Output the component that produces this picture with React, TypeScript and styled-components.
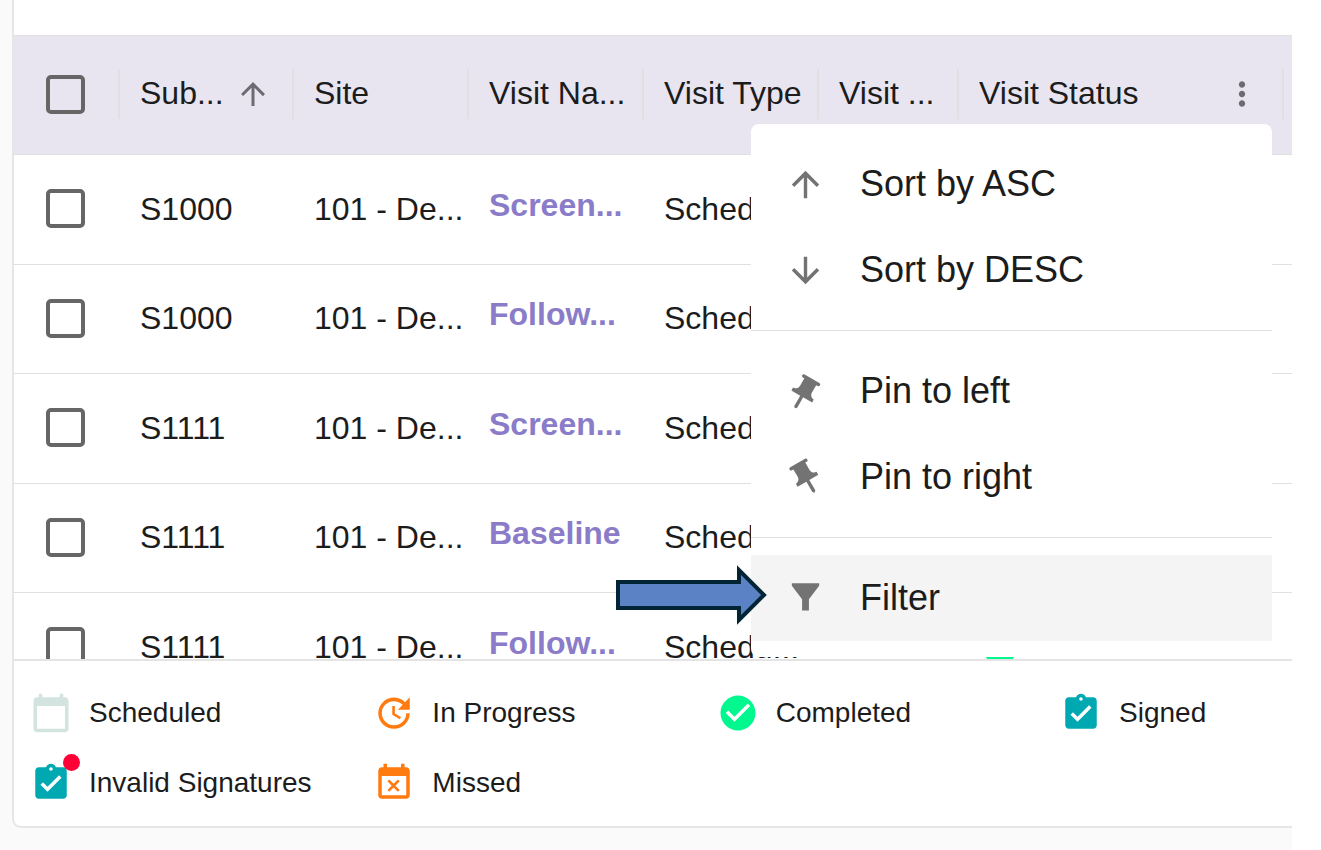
import React from "react";
import styled, { createGlobalStyle, css } from "styled-components";

const line = "#e0e0e0";

const GlobalStyle = createGlobalStyle`
  *, *::before, *::after { box-sizing: border-box; }
  body {
    margin: 0;
    background: #ffffff;
    color: #1c1c1c;
    font-family: "Liberation Sans", Arial, sans-serif;
  }
`;

const Page = styled.div`
  min-height: 100vh;
  margin-right: 29px;
  padding: 0 0 22px 12px;
  background: #fafafa;
  overflow: hidden;
`;

const Card = styled.main`
  padding-top: 35px;
  background: #ffffff;
  border-left: 2px solid #e6e6e6;
  border-bottom: 2px solid #e6e6e6;
  border-bottom-left-radius: 9px;
`;

const GridViewport = styled.div`
  height: 624px;
  overflow: hidden;
  border-top: 1px solid ${line};
`;

const Table = styled.table`
  width: 100%;
  table-layout: fixed;
  border-collapse: separate;
  border-spacing: 0;
  font-size: 32px;
  line-height: 40px;
`;

const Col = styled.col<{ $w?: number }>`
  ${(p) => p.$w && css`width: ${p.$w}px;`}
`;

const HeadCell = styled.th`
  position: relative;
  height: 119px;
  padding: 0 0 2px;
  background: #e8e5f1;
  border-bottom: 1px solid ${line};
  font-weight: 400;
  text-align: left;
  white-space: nowrap;
`;

const HeadInner = styled.div<{ $check?: boolean }>`
  display: flex;
  align-items: center;
  justify-content: space-between;
  height: 50px;
  padding: 0 21px;
  padding-left: ${(p) => (p.$check ? 32 : 20)}px;
  border-right: 2px solid #e0e0e2;
`;

const HeadLabel = styled.span`
  padding-bottom: 2px;
`;

const Row = styled.tr`
  height: 110px;

  &:nth-child(even) { height: 109px; }
`;

const Cell = styled.td<{ $check?: boolean }>`
  padding: 0 0 2px ${(p) => (p.$check ? 32 : 20)}px;
  border-bottom: 1px solid ${line};
  white-space: nowrap;
  overflow: hidden;
  vertical-align: middle;
`;

const VisitLink = styled.a`
  display: block;
  padding-bottom: 8px;
  color: #8a7cc9;
  font-weight: 700;
  text-decoration: none;
`;

const Checkbox = styled.input`
  appearance: none;
  display: block;
  width: 39px;
  height: 39px;
  margin: 0;
  border: 4px solid #666666;
  border-radius: 5px;
  background: transparent;
`;

const IconButton = styled.button`
  display: flex;
  padding: 0;
  border: 0;
  background: none;
  color: #6c6b72;
`;

const Menu = styled.div`
  position: absolute;
  z-index: 2;
  top: 88px;
  right: 12px;
  width: 521px;
  padding: 17px 0 16px;
  background: #ffffff;
  border-radius: 8px;
`;

const MenuItem = styled.button<{ $active?: boolean }>`
  display: flex;
  align-items: center;
  gap: 34px;
  width: 100%;
  height: 86px;
  padding: 0 34px;
  border: 0;
  background: ${(p) => (p.$active ? "#f4f4f4" : "transparent")};
  color: #1c1c1c;
  font: inherit;
  font-size: 36px;
  text-align: left;

  svg { color: #737373; }
`;

const Divider = styled.hr`
  height: 1px;
  margin: 17px 0;
  border: 0;
  background: ${line};
`;

const Pointer = styled.svg`
  position: absolute;
  top: 441px;
  left: -136px;
`;

const Legend = styled.ul`
  display: grid;
  grid-template-columns: repeat(3, minmax(0, 3fr)) minmax(0, 2fr);
  grid-auto-rows: 70px;
  margin: 0;
  padding: 17px 3px 8px 16px;
  border-top: 2px solid #e4e4e4;
  list-style: none;
  font-size: 28px;
  line-height: 36px;
`;

const LegendItem = styled.li`
  display: flex;
  align-items: center;
  gap: 17px;
  white-space: nowrap;
`;

const LegendIcon = styled.span<{ $color: string }>`
  position: relative;
  display: flex;
  color: ${(p) => p.$color};
`;

const Badge = styled.span`
  position: absolute;
  top: -8px;
  right: -8px;
  width: 17px;
  height: 17px;
  border-radius: 50%;
  background: #ff0037;
`;

const Glyph = styled.svg`
  display: block;
  flex: none;
`;

const paths = {
  up: "M4 12l1.41 1.41L11 7.83V20h2V7.83l5.58 5.59L20 12l-8-8-8 8z",
  down: "M20 12l-1.41-1.41L13 16.17V4h-2v12.17l-5.58-5.59L4 12l8 8 8-8z",
  more: "M12 8c1.1 0 2-.9 2-2s-.9-2-2-2-2 .9-2 2 .9 2 2 2zm0 2c-1.1 0-2 .9-2 2s.9 2 2 2 2-.9 2-2-.9-2-2-2zm0 6c-1.1 0-2 .9-2 2s.9 2 2 2 2-.9 2-2-.9-2-2-2z",
  pin: "M16 9V4h1c.55 0 1-.45 1-1s-.45-1-1-1H7c-.55 0-1 .45-1 1s.45 1 1 1h1v5c0 1.66-1.34 3-3 3v2h5.97v7l1 1 1-1v-7H19v-2c-1.66 0-3-1.34-3-3z",
  filter: "M4 3h16v1.600l-6 7.800V19h-4v-6.600L4 4.600z",
  calendar: "M20 3h-1V1h-2v2H7V1H5v2H4c-1.1 0-2 .9-2 2v16c0 1.1.9 2 2 2h16c1.1 0 2-.9 2-2V5c0-1.1-.9-2-2-2zm0 18H4V8h16v13z",
  update: "M21 10.12h-6.78l2.74-2.82c-2.73-2.7-7.15-2.8-9.88-.1-2.73 2.71-2.73 7.08 0 9.79s7.15 2.71 9.88 0C18.32 15.65 19 14.08 19 12.1h2c0 1.98-.88 4.55-2.64 6.29-3.51 3.48-9.21 3.48-12.72 0-3.5-3.47-3.53-9.11-.02-12.58s9.14-3.47 12.65 0L21 3v7.12zM12.5 8v4.25l3.5 2.08-.72 1.21L11 13V8h1.5z",
  done: "M12 2C6.48 2 2 6.48 2 12s4.48 10 10 10 10-4.48 10-10S17.52 2 12 2zm-2 15l-5-5 1.41-1.41L10 14.17l7.59-7.59L19 8l-9 9z",
  signed: "M19 3h-4.18C14.4 1.84 13.3 1 12 1c-1.3 0-2.4.84-2.82 2H5c-1.1 0-2 .9-2 2v14c0 1.1.9 2 2 2h14c1.1 0 2-.9 2-2V5c0-1.1-.9-2-2-2zm-7 0c.55 0 1 .45 1 1s-.45 1-1 1-1-.45-1-1 .45-1 1-1zm-2 14l-4-4 1.41-1.41L10 14.17l6.59-6.59L18 9l-8 8z",
  missed: "M9.31 17l2.44-2.44L14.19 17l1.06-1.06-2.44-2.44 2.44-2.44L14.19 10l-2.44 2.44L9.31 10l-1.06 1.06 2.44 2.44-2.44 2.44L9.31 17zM19 3h-1V1h-2v2H8V1H6v2H5c-1.11 0-1.99.9-1.99 2L3 19c0 1.1.89 2 2 2h14c1.1 0 2-.9 2-2V5c0-1.1-.9-2-2-2zm0 16H5V8h14v11z",
};

type IconName = keyof typeof paths;

interface IconProps {
  name: IconName;
  size: number;
  transform?: string;
  color?: string;
}

function Icon({ name, size, transform, color = "currentColor" }: IconProps) {
  return (
    <Glyph width={size} height={size} viewBox="0 0 24 24" fill={color} aria-hidden="true">
      <path d={paths[name]} transform={transform} />
    </Glyph>
  );
}

const rows = [
  { subject: "S1000", visit: "Screen..." },
  { subject: "S1000", visit: "Follow..." },
  { subject: "S1111", visit: "Screen..." },
  { subject: "S1111", visit: "Baseline" },
  { subject: "S1111", visit: "Follow..." },
];

const legend: { label: string; icon: IconName; color: string; badge?: boolean }[] = [
  { label: "Scheduled", icon: "calendar", color: "#d3e3e0" },
  { label: "In Progress", icon: "update", color: "#ff7a0f" },
  { label: "Completed", icon: "done", color: "#00f88f" },
  { label: "Signed", icon: "signed", color: "#00a9b2" },
  { label: "Invalid Signatures", icon: "signed", color: "#00a9b2", badge: true },
  { label: "Missed", icon: "missed", color: "#ff7a0f" },
];

function ColumnMenu() {
  return (
    <Menu role="menu" aria-label="Column menu">
      <MenuItem role="menuitem"><Icon name="up" size={41} />Sort by ASC</MenuItem>
      <MenuItem role="menuitem"><Icon name="down" size={41} />Sort by DESC</MenuItem>
      <Divider />
      <MenuItem role="menuitem"><Icon name="pin" size={41} transform="translate(-1.2 1.2) rotate(30 12 12)" />Pin to left</MenuItem>
      <MenuItem role="menuitem"><Icon name="pin" size={41} transform="translate(0.4 0.2) rotate(-30 12 12)" />Pin to right</MenuItem>
      <Divider />
      <MenuItem role="menuitem" $active><Icon name="filter" size={41} />Filter</MenuItem>
      <Pointer width="154" height="60" viewBox="0 0 154 60" aria-hidden="true">
        <path d="M3 17H124V5L149 30L124 55V43H3Z" fill="#5b82c5" stroke="#022535" strokeWidth="4" />
      </Pointer>
    </Menu>
  );
}

export default function App() {
  return (
    <>
      <GlobalStyle />
      <Page>
        <Card>
          <GridViewport>
            <Table>
              <colgroup>
                <Col $w={106} />
                <Col $w={174} />
                <Col $w={175} />
                <Col $w={175} />
                <Col $w={175} />
                <Col $w={140} />
                <Col $w={325} />
                <Col />
              </colgroup>
              <thead>
                <tr>
                  <HeadCell><HeadInner $check><Checkbox type="checkbox" aria-label="Select all rows" /></HeadInner></HeadCell>
                  <HeadCell aria-sort="ascending"><HeadInner><HeadLabel>Sub...</HeadLabel><Icon name="up" size={36} color="#6c6b72" /></HeadInner></HeadCell>
                  <HeadCell><HeadInner><HeadLabel>Site</HeadLabel></HeadInner></HeadCell>
                  <HeadCell><HeadInner><HeadLabel>Visit Na...</HeadLabel></HeadInner></HeadCell>
                  <HeadCell><HeadInner><HeadLabel>Visit Type</HeadLabel></HeadInner></HeadCell>
                  <HeadCell><HeadInner><HeadLabel>Visit ...</HeadLabel></HeadInner></HeadCell>
                  <HeadCell>
                    <HeadInner>
                      <HeadLabel>Visit Status</HeadLabel>
                      <IconButton aria-label="Column options"><Icon name="more" size={38} /></IconButton>
                    </HeadInner>
                    <ColumnMenu />
                  </HeadCell>
                  <HeadCell />
                </tr>
              </thead>
              <tbody>
                {rows.map((row, i) => (
                  <Row key={i}>
                    <Cell $check><Checkbox type="checkbox" aria-label={`Select row ${i + 1}`} /></Cell>
                    <Cell>{row.subject}</Cell>
                    <Cell>101 - De...</Cell>
                    <Cell><VisitLink href="#">{row.visit}</VisitLink></Cell>
                    <Cell>Schedu...</Cell>
                    <Cell />
                    <Cell><Icon name="done" size={42} color="#00f88f" /></Cell>
                    <Cell />
                  </Row>
                ))}
              </tbody>
            </Table>
          </GridViewport>
          <Legend>
            {legend.map((item) => (
              <LegendItem key={item.label}>
                <LegendIcon $color={item.color}>
                  <Icon name={item.icon} size={42} />
                  {item.badge && <Badge />}
                </LegendIcon>
                {item.label}
              </LegendItem>
            ))}
          </Legend>
        </Card>
      </Page>
    </>
  );
}
